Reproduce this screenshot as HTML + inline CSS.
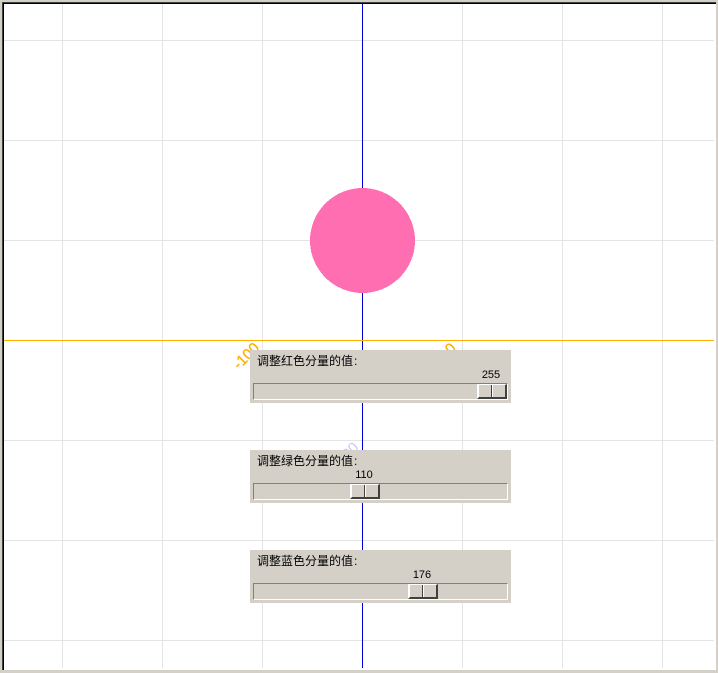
<!DOCTYPE html>
<html>
<head>
<meta charset="utf-8">
<style>
html,body{margin:0;padding:0;width:718px;height:673px;overflow:hidden;background:#d4d0c8}
#c{position:absolute;left:0;top:0}
.p{position:absolute;left:250px;width:261px;height:53px;background:#d4d0c8;font-family:"Liberation Sans","WenQuanYi Zen Hei","Noto Sans CJK SC",sans-serif;color:#000}
.l{position:absolute;left:7px;top:3px;font-size:12px;line-height:16px;white-space:nowrap}
.l span{margin-left:1px}
.v{position:absolute;top:19px;font-size:11px;line-height:13px;width:30px;text-align:center}
.t{position:absolute;left:3px;top:33px;width:255px;height:17px;box-sizing:border-box;border-style:solid;border-width:1px;border-color:#808080 #fff #fff #808080}
.b{position:absolute;top:34px;width:30px;height:15px;box-sizing:border-box;background:#d4d0c8;border-style:solid;border-width:1px 2px 2px 2px;border-color:#fff #404040 #404040 #fff}
.b:after{content:"";position:absolute;left:12px;top:0;bottom:0;width:1px;background:#404040;border-right:1px solid #fff}
</style>
</head>
<body>
<svg id="c" width="718" height="673" xmlns="http://www.w3.org/2000/svg" shape-rendering="crispEdges">
<rect x="0" y="0" width="718" height="673" fill="#d4d0c8"/>
<rect x="2" y="2" width="714" height="668" fill="#fff"/>
<rect x="2" y="2" width="714" height="1" fill="#404040"/>
<rect x="2" y="2" width="1" height="668" fill="#404040"/>
<rect x="3" y="3" width="713" height="1" fill="#000"/>
<rect x="3" y="3" width="1" height="667" fill="#000"/>
<g fill="#e4e4e4">
<rect x="62" y="4" width="1" height="664"/>
<rect x="162" y="4" width="1" height="664"/>
<rect x="262" y="4" width="1" height="664"/>
<rect x="462" y="4" width="1" height="664"/>
<rect x="562" y="4" width="1" height="664"/>
<rect x="662" y="4" width="1" height="664"/>
<rect x="4" y="40" width="710" height="1"/>
<rect x="4" y="140" width="710" height="1"/>
<rect x="4" y="240" width="710" height="1"/>
<rect x="4" y="440" width="710" height="1"/>
<rect x="4" y="540" width="710" height="1"/>
<rect x="4" y="640" width="710" height="1"/>
</g>
<text transform="translate(239,370) rotate(-45)" font-family="Liberation Sans,sans-serif" font-size="15" fill="#ffae00" stroke="#ffae00" stroke-width="0.3">-100</text>
<text transform="translate(451,355) rotate(-45)" font-family="Liberation Sans,sans-serif" font-size="15" fill="#ffae00" stroke="#ffae00" stroke-width="0.3">0</text>
<text transform="translate(342,466) rotate(-45)" font-family="Liberation Sans,sans-serif" font-size="15" fill="#c8c8ff">100</text>
<rect x="362" y="4" width="1" height="664" fill="#0000d8"/>
<rect x="4" y="340" width="710" height="1" fill="#ffae00"/>
<circle cx="362.5" cy="240.5" r="52.5" fill="#ff6eb0"/>
</svg>

<div class="p" style="top:350px">
<div class="l">调整红色分量的值<span>:</span></div>
<div class="v" style="left:226px">255</div>
<div class="t"></div>
<div class="b" style="left:227px"></div>
</div>

<div class="p" style="top:450px">
<div class="l">调整绿色分量的值<span>:</span></div>
<div class="v" style="left:99px">110</div>
<div class="t"></div>
<div class="b" style="left:100px"></div>
</div>

<div class="p" style="top:550px">
<div class="l">调整蓝色分量的值<span>:</span></div>
<div class="v" style="left:157px">176</div>
<div class="t"></div>
<div class="b" style="left:158px"></div>
</div>
</body>
</html>
